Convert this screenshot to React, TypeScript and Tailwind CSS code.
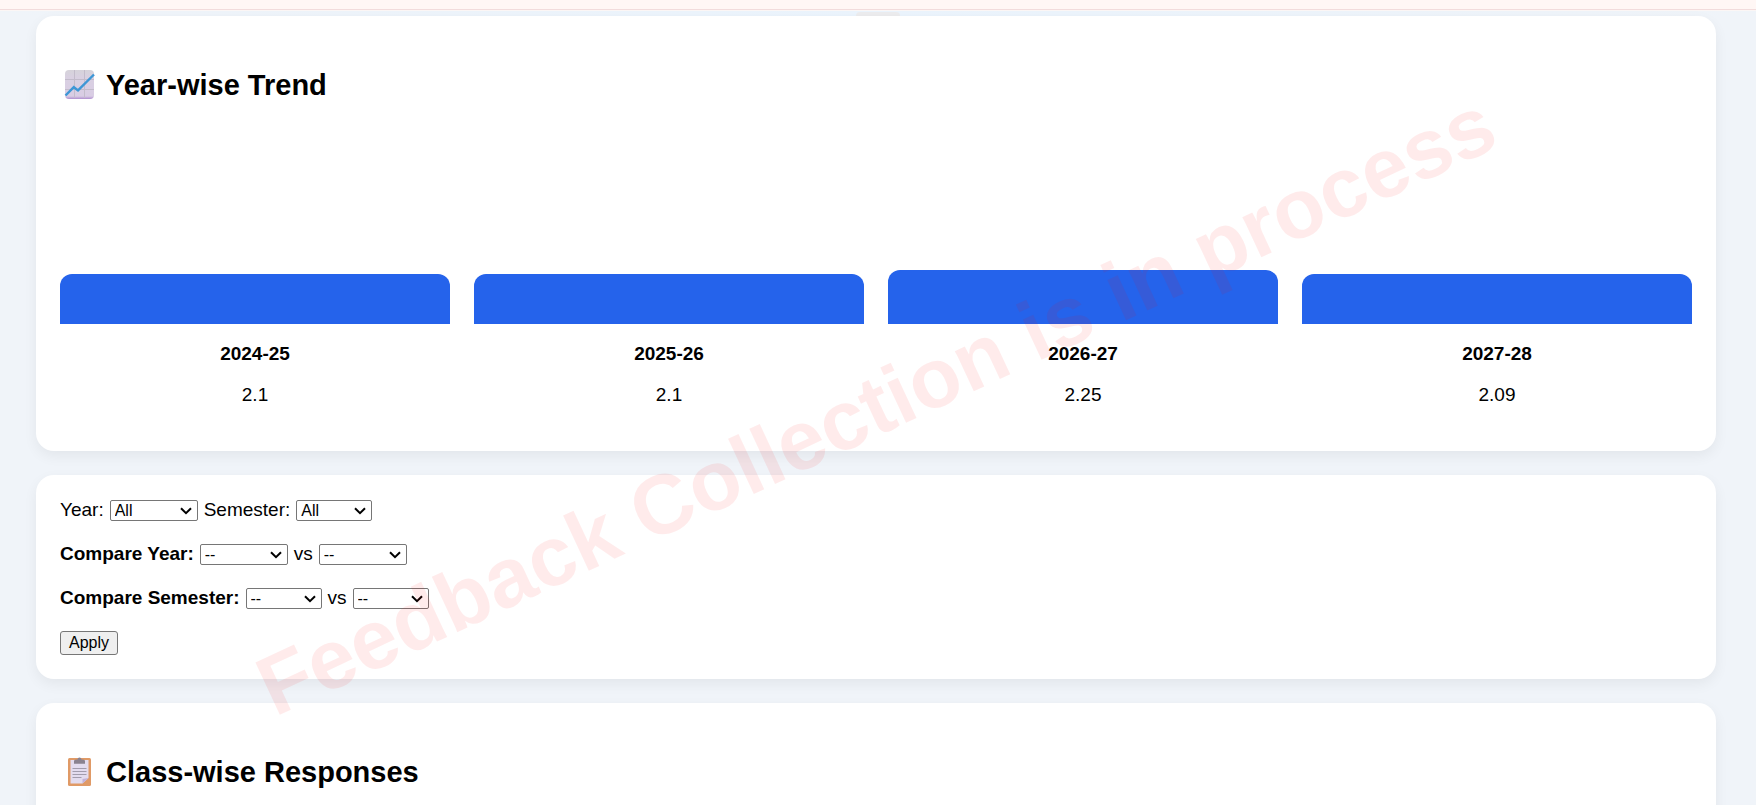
import { ReactNode } from "react";

interface ITrend {
  year: string;
  score: number;
  barClass: string;
}

const trends: ITrend[] = [
  { year: "2024-25", score: 2.1, barClass: "h-[50px]" },
  { year: "2025-26", score: 2.1, barClass: "h-[50px]" },
  { year: "2026-27", score: 2.25, barClass: "h-[54px]" },
  { year: "2027-28", score: 2.09, barClass: "h-[50px]" },
];

const years = trends.map((trend) => trend.year);
const semesters = ["Odd", "Even"];

const ChartIcon = () => (
  <svg viewBox="0 0 32 32" className="size-8 shrink-0" aria-hidden="true">
    <defs>
      <linearGradient id="chartBg" x1="0" y1="0" x2="0" y2="1">
        <stop offset="0" stopColor="#d6d3da" />
        <stop offset="0.3" stopColor="#d9d0e2" />
        <stop offset="0.9" stopColor="#d9cde4" />
        <stop offset="1" stopColor="#b08fd0" />
      </linearGradient>
    </defs>
    <rect x="1" y="1" width="29" height="29" rx="4" fill="url(#chartBg)" />
    <path
      d="M10.500 1v28M20.500 1v28M1 10.500h29M1 20.500h29"
      stroke="#c3bccb"
      strokeWidth="1"
    />
    <path
      d="M1.500 26.500 9.800 18.200l4.200 3.200L30 5.500"
      fill="none"
      stroke="#3e97d6"
      strokeWidth="2.400"
    />
  </svg>
);

const ClipboardIcon = () => (
  <svg viewBox="0 0 32 32" className="size-8 shrink-0" aria-hidden="true">
    <rect x="4" y="2" width="23" height="28" rx="1.500" fill="#e09a66" />
    <path d="M6.500 4h18v18l-6 5.500h-12z" fill="#e3dcef" />
    <path d="M18.500 27.500v-4.500l6-1z" fill="#c3b2d8" />
    <path
      d="M10 7.800V5q0-1.500 2-1.500h1.500q0-2 2-2t2 2H19q2 0 2 1.500v2.800z"
      fill="#8a8290"
    />
    <path
      d="M8.500 12.500h14M8.500 15.500h14M8.500 18.500h14M8.500 21.500h9"
      stroke="#a29cad"
      strokeWidth="1"
    />
  </svg>
);

const Card = ({ children }: { children: ReactNode }) => (
  <section className="rounded-[18px] bg-white p-6 shadow-[0_5px_14px_rgba(0,0,0,0.06)]">
    {children}
  </section>
);

const CardTitle = ({ icon, title }: { icon: ReactNode; title: string }) => (
  <h2 className="flex items-center gap-2.5 pt-[29px] pl-1 text-[29px] leading-8 font-bold">
    {icon}
    {title}
  </h2>
);

interface ISelectProps {
  id: string;
  empty: string;
  options: string[];
  widthClass: string;
}

const Select = ({ id, empty, options, widthClass }: ISelectProps) => (
  <span className="relative inline-flex">
    <select
      id={id}
      className={`h-[21px] appearance-none rounded-[2px] border border-[#767676] bg-white pl-1 text-base leading-[19px] ${widthClass}`}
    >
      <option value="">{empty}</option>
      {options.map((option) => (
        <option key={option}>{option}</option>
      ))}
    </select>
    <svg
      viewBox="0 0 12 8"
      className="pointer-events-none absolute top-[7px] right-1.5 h-2 w-3"
      aria-hidden="true"
    >
      <path
        d="M1 1.200 6 6.200l5-5"
        fill="none"
        stroke="black"
        strokeWidth="2"
      />
    </svg>
  </span>
);

const Filters = () => (
  <form
    className="flex flex-col items-start gap-[22px]"
    onSubmit={(e) => e.preventDefault()}
  >
    <div className="flex items-center gap-1.5">
      <label htmlFor="year">Year:</label>
      <Select id="year" empty="All" options={years} widthClass="w-[88px]" />
      <label htmlFor="semester">Semester:</label>
      <Select id="semester" empty="All" options={semesters} widthClass="w-[76px]" />
    </div>
    <div className="flex items-center gap-1.5">
      <label htmlFor="year1" className="font-bold">
        Compare Year:
      </label>
      <Select id="year1" empty="--" options={years} widthClass="w-[88px]" />
      <label htmlFor="year2">vs</label>
      <Select id="year2" empty="--" options={years} widthClass="w-[88px]" />
    </div>
    <div className="flex items-center gap-1.5">
      <label htmlFor="sem1" className="font-bold">
        Compare Semester:
      </label>
      <Select id="sem1" empty="--" options={semesters} widthClass="w-[76px]" />
      <label htmlFor="sem2">vs</label>
      <Select id="sem2" empty="--" options={semesters} widthClass="w-[76px]" />
    </div>
    <button
      type="submit"
      className="h-6 rounded-[3px] border border-[#767676] bg-[#efefef] px-2 text-base leading-5"
    >
      Apply
    </button>
  </form>
);

const App = () => {
  return (
    <div className="h-screen overflow-hidden bg-[#f0f4f9] font-['Liberation_Sans',Arial,sans-serif] text-[19px] leading-[22px] text-black">
      <div className="h-2.5 border-b border-[#f2dcdc] bg-[#fff7f5]" />
      <div className="flex h-1.5 items-end justify-center border-t border-[#fbf6f5] bg-linear-to-r from-[#f0f4f9] via-[#ebf4fd] to-[#f0f4f9]">
        <div className="h-1 w-11 rounded-t-full bg-[#ececee]" />
      </div>
      <main className="flex flex-col gap-6 pr-10 pl-9">
        <Card>
          <CardTitle icon={<ChartIcon />} title="Year-wise Trend" />
          <div className="grid grid-cols-4 items-end gap-6 pt-[169px] pb-[21px]">
            {trends.map((trend) => (
              <div key={trend.year} className="text-center">
                <div className={`rounded-t-xl bg-[#2563eb] ${trend.barClass}`} />
                <p className="mt-[19px] font-bold">{trend.year}</p>
                <p className="mt-[19px]">{trend.score}</p>
              </div>
            ))}
          </div>
        </Card>
        <Card>
          <Filters />
        </Card>
        <Card>
          <CardTitle icon={<ClipboardIcon />} title="Class-wise Responses" />
          {/* room for the response list */}
          <div className="h-24" />
        </Card>
      </main>
      <div className="pointer-events-none fixed inset-0 flex items-center justify-center pt-1 pr-1">
        <span className="-rotate-25 text-[84px] leading-none font-bold whitespace-nowrap text-[rgba(255,0,0,0.08)]">
          Feedback Collection is in process
        </span>
      </div>
    </div>
  );
};

export default App;
